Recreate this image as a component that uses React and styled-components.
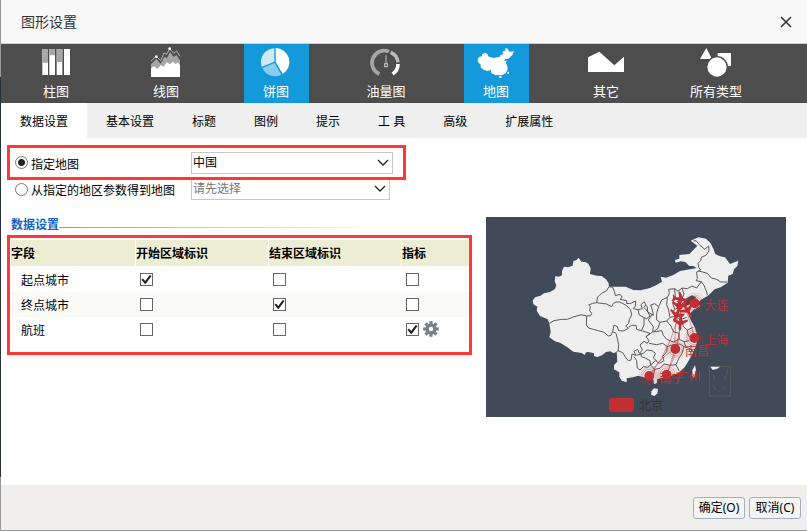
import React, { useState } from "react";
import styled, { createGlobalStyle } from "styled-components";

const chartTypes = [
  { key: "bar", label: "柱图" },
  { key: "line", label: "线图" },
  { key: "pie", label: "饼图" },
  { key: "gauge", label: "油量图" },
  { key: "map", label: "地图" },
  { key: "other", label: "其它" },
  { key: "all", label: "所有类型" },
];

const tabs = [
  "数据设置",
  "基本设置",
  "标题",
  "图例",
  "提示",
  "工 具",
  "高级",
  "扩展属性",
];

const columns = ["开始区域标识", "结束区域标识", "指标"];

const initialFields = [
  { name: "起点城市", checks: [true, false, false] },
  { name: "终点城市", checks: [false, true, false] },
  { name: "航班", checks: [false, false, true], gear: true },
];

const cities = [
  { name: "大连", x: 644, y: 280, tx: 673, ty: 300 },
  { name: "上海", x: 643, y: 384, tx: 673, ty: 406 },
  { name: "南昌", x: 586, y: 417, tx: 615, ty: 438 },
  { name: "南宁", x: 508, y: 498, tx: 538, ty: 518 },
  { name: "广州", x: 560, y: 494, tx: 590, ty: 514 },
];

const planes = [
  { x: 602, y: 268, r: 100 },
  { x: 598, y: 288, r: 190 },
  { x: 622, y: 300, r: 150 },
  { x: 590, y: 314, r: 200 },
  { x: 601, y: 338, r: 184 },
];

const CHINA =
  "M158 272L165 262L182 257L192 250L210 246L225 237L229 225L224 214L226 198L236 200L246 196L246 183L252 170L264 172L278 167L280 153L290 150L296 143L304 155L316 156L325 161L332 175L330 192L350 197L365 198L378 208L386 220L387 230L410 230L437 230L460 240L482 241L510 234L528 226L546 215L542 200L558 203L580 195L600 183L635 177L650 174L640 168L628 168L616 156L602 154L587 158L585 150L598 146L598 135L628 132L642 118L652 107L632 92L655 82L678 86L692 100L700 116L706 132L720 139L735 142L750 162L775 152L772 168L762 178L758 192L745 197L743 218L722 232L704 238L695 247L684 257L668 266L652 278L640 276L648 262L636 256L620 264L610 276L616 288L634 282L652 280L660 288L640 300L626 316L634 334L644 352L650 370L641 380L652 392L646 412L638 430L626 452L614 472L596 488L575 497L555 502L532 507L530 520L522 522L520 508L496 503L475 497L458 502L440 505L440 517L425 512L418 500L418 487L402 478L402 465L412 455L410 425L400 430L392 424L378 426L366 436L352 441L342 438L342 430L325 426L318 427L314 435L305 429L280 425L262 412L240 398L225 394L208 382L212 366L208 340L203 328L180 318L170 302L172 290L160 283Z";

const PROVINCES = [
  "M208 340L222 332L245 328L262 328L280 321L303 314L320 318L332 317L335 310L329 302L331 290L326 285L338 280L350 278L352 262L365 250L380 242L387 230",
  "M320 318L319 345L326 354L340 358L355 362L372 367L385 378L393 376L398 365L402 345L412 350L416 362L430 363L445 355L437 348L446 340L448 328L455 315L452 300L440 287L420 276L408 276L400 280L395 290L380 282L350 278",
  "M387 230L398 232L403 244L406 257L420 253L427 262L420 268L440 272L440 281L452 280L467 273L466 288L460 296L474 299L478 315L492 323L492 345L484 362L470 358L468 346L455 346L446 352",
  "M474 299L487 296L483 284L493 275L497 284L492 293L502 303L510 318L500 326L492 323",
  "M398 365L408 370L413 390L416 404L414 422L428 428L438 444L445 452L453 450L456 432L468 436L462 424L473 418L478 430L487 420L480 405L492 394L502 400L507 392L498 380L510 370L484 362",
  "M414 422L410 426M462 440L470 452L472 474L480 480L490 470L503 472L512 465",
  "M495 284L502 290L503 306L520 316L517 300L512 285L524 281L536 290L545 270L562 262L568 250L566 238L584 236L594 244L606 234L622 236L636 228L650 234L664 215",
  "M536 290L530 310L530 330L540 337L560 333L570 322L566 300L560 284L562 262",
  "M517 312L505 330L520 350L518 366L498 380M540 337L534 355L520 366M520 366L545 362L550 376L560 388L580 396L596 388",
  "M570 322L590 318L600 330L620 322M560 333L573 348L580 365L596 370L598 388L612 395L628 392M606 330L610 350L622 360L625 378L641 380",
  "M584 236L586 262L578 280L584 298L576 310M606 234L612 252L605 268L590 275M584 298L604 288L610 276",
  "M507 400L530 404L548 400L562 410L560 425L548 440L552 452L538 460L526 452L512 465L510 452L496 444L484 440L482 428",
  "M562 410L580 404L600 402L612 410L606 430L596 446L588 464L570 466L552 462M612 410L630 416L640 428",
  "M470 436L490 430L500 420L516 422L526 430L520 444L530 452",
  "M512 465L524 478L540 475L552 462M524 478L520 500M588 464L598 484",
  "M612 395L618 412M622 360L640 352",
  "M640 93L648 92L658 104L674 118L686 108L687 122L678 136L664 142L662 152L654 160L656 172L662 180L650 186L652 206L648 212L664 215L672 226L680 246L682 256",
  "M656 183L668 186L682 190L694 204L710 208L722 216L741 216",
];

const GlobalStyle = createGlobalStyle`
  * {
    box-sizing: border-box;
  }
  body {
    margin: 0;
    font-family: "Noto Sans", "Noto Sans CJK SC", sans-serif;
    font-size: 12px;
    line-height: 18px;
    color: #000;
  }
  button, select, input {
    font: inherit;
    color: inherit;
    margin: 0;
  }
`;

const TypeIcon = ({ type }) => (
  <TypeSvg viewBox="0 0 129 96" aria-hidden="true">
    {type === "bar" && (
      <>
        <path
          fill="#fff"
          d="M22 6h17v78H22zM43 6h17v78H43zM65 6h17v78H65zM87 6h18v78H87z"
        />
        <path fill="#a6a6a6" d="M22 6h17v41H22zM43 6h17v19H43zM65 6h17v39H65z" />
      </>
    )}
    {type === "line" && (
      <>
        <path
          fill="#a6a6a6"
          d="M18 52L34 36L47 50L58 29L66 33L75 15L86 30L94 24L105 40V90H18Z"
        />
        <path
          fill="#fff"
          d="M18 64L27 57L37 66L47 54L55 60L65 46L75 52L84 44L92 52L98 46L105 54V90H18Z"
        />
        <path
          fill="none"
          stroke="#b5b5b5"
          strokeWidth="3"
          d="M18 42L34 28L47 41L57 18L65 22L74 5L86 19L95 12L105 28"
        />
        <circle cx="34" cy="29" r="4" fill="#fff" />
        <circle cx="74" cy="5" r="4" fill="#fff" />
      </>
    )}
    {type === "pie" && (
      <>
        <path fill="#cfe9f7" d="M58 44V4A41 41 0 0 0 20 59Z" />
        <path fill="#86cdee" d="M59 48L22 63A41 41 0 0 0 79 83Z" />
        <path fill="#fff" d="M62 44V3A42 42 0 0 1 83 81Z" />
      </>
    )}
    {type === "gauge" && (
      <g fill="none" strokeWidth="11">
        <path stroke="#a6a6a6" d="M43 81A36 36 0 0 1 72 14" />
        <path stroke="#bcbcbc" d="M77 16A36 36 0 0 1 99 46" />
        <path stroke="#fff" d="M99 51A36 36 0 0 1 83 81" />
        <path stroke="#a6a6a6" strokeWidth="4" d="M63 25V49" />
        <rect x="59" y="50" width="8" height="9" stroke="#d0d0d0" strokeWidth="3" />
      </g>
    )}
    {type === "map" && (
      <path
        fill="#fff"
        d="M8 35L14 29L21 28L21 22L30 17L37 21L41 29L56 33L75 29L76 24L87 21L82 18L85 12L91 12L91 4L98 5L103 14L117 13L112 24L100 35L90 37L88 43L97 40L92 46L97 58L98 67L92 78L83 84L74 85L69 84L60 85L56 81L49 79L48 69L37 72L26 68L17 61L17 53L9 45ZM73 87h6v6h-6zM97 74h5v6h-5z"
      />
    )}
    {type === "other" && (
      <path fill="#fff" d="M9 31L43 14L88 55L117 29V75H9Z" />
    )}
    {type === "all" && (
      <>
        <path fill="#fff" d="M34 3L51 36H15ZM68 18h40v39H68z" />
        <circle
          cx="66"
          cy="60"
          r="31"
          fill="#fff"
          stroke="#4d4d4d"
          strokeWidth="4"
        />
      </>
    )}
  </TypeSvg>
);

const Chevron = () => (
  <ChevronSvg viewBox="0 0 12 8" aria-hidden="true">
    <path d="M1 1L6 6L11 1" fill="none" stroke="#222" strokeWidth="1.3" />
  </ChevronSvg>
);

const Gear = () => (
  <svg width="16" height="16" viewBox="-8 -8 16 16" aria-hidden="true">
    {[0, 45, 90, 135].map((angle) => (
      <path
        key={angle}
        d="M-1.6 -7.8H1.6V7.8H-1.6Z"
        fill="#7c8084"
        transform={`rotate(${angle})`}
      />
    ))}
    <circle r="5.6" fill="#7c8084" />
    <circle r="2.2" fill="#fff" />
  </svg>
);

const FlightMap = () => (
  <MapSvg viewBox="18 21 900 600" role="img" aria-label="中国">
    <g fill="#eee">
      <path d={CHINA} />
      <path d="M514 544L522 535L534 537L532 550L524 558L514 555Z" />
      <path d="M645 466L636 482L636 496L642 504L648 480Z" />
    </g>
    <g fill="none" stroke="#5a5a5a" strokeWidth="3" strokeLinejoin="round">
      {PROVINCES.map((d) => (
        <path key={d} d={d} />
      ))}
    </g>
    <rect
      x="688"
      y="469"
      width="63"
      height="89"
      fill="none"
      stroke="#5a5a5a"
      strokeWidth="3"
    />
    <path d="M691 470H720L712 476L698 480Z" fill="#eee" />
    <path
      d="M744 476L740 496L732 508M700 495L704 510M699 525L706 540M730 530L735 538M715 543L720 543"
      fill="none"
      stroke="#5a5a5a"
      strokeWidth="3"
    />
    <g fill="none" stroke="#c22e34" strokeWidth="3" strokeOpacity="0.5">
      <path d="M602 270Q622 262 644 280M602 270Q630 320 643 384" />
      <path d="M602 270Q606 350 586 417M602 270Q580 350 586 417" />
      <path d="M602 270Q590 390 508 498M602 270Q610 400 560 494" />
      <path d="M586 417Q540 440 508 498M586 417L560 494" />
    </g>
    <g fill="#c22e34">
      {planes.map((p) => (
        <path
          key={`${p.x}-${p.y}`}
          transform={`translate(${p.x} ${p.y}) rotate(${p.r})`}
          d="M0 -25L4 -19V-7L22 5V11L4 5V17L10 23V26L0 23L-10 26V23L-4 17V5L-22 11V5L-4 -7V-19Z"
        />
      ))}
      {cities.map((c) => (
        <g key={c.name}>
          <circle cx={c.x} cy={c.y} r="15" />
          <g fill="none" stroke="#c22e34" strokeWidth="2">
            <circle cx={c.x} cy={c.y} r="20" strokeOpacity="0.6" />
            <circle cx={c.x} cy={c.y} r="25" strokeOpacity="0.45" />
            <circle cx={c.x} cy={c.y} r="31" strokeOpacity="0.2" />
          </g>
          <text x={c.tx} y={c.ty} fontSize="36">
            {c.name}
          </text>
        </g>
      ))}
      <rect x="387" y="564" width="75" height="42" rx="9" />
    </g>
    <text x="477" y="600" fontSize="36" fill="#333">
      北京
    </text>
  </MapSvg>
);

const App = () => {
  const [activeTab, setActiveTab] = useState("数据设置");
  const [types, setTypes] = useState(["pie", "map"]);
  const [source, setSource] = useState("map");
  const [fields, setFields] = useState(initialFields);

  const toggleType = (key) => {
    setTypes(
      types.includes(key) ? types.filter((t) => t !== key) : [...types, key]
    );
  };

  const toggleCheck = (row, col) => {
    setFields(
      fields.map((field, i) =>
        i === row
          ? { ...field, checks: field.checks.map((c, j) => (j === col ? !c : c)) }
          : field
      )
    );
  };

  return (
    <Page>
      <GlobalStyle />
      <Dialog>
        <TitleBar>
          <Title>图形设置</Title>
          <CloseButton type="button" aria-label="关闭">
            <svg width="12" height="12" viewBox="0 0 12 12">
              <path
                d="M1 1L11 11M11 1L1 11"
                stroke="#333"
                strokeWidth="1.5"
                fill="none"
              />
            </svg>
          </CloseButton>
        </TitleBar>
        <TypeBar>
          {chartTypes.map((type) => (
            <TypeButton
              key={type.key}
              type="button"
              $active={types.includes(type.key)}
              onClick={() => toggleType(type.key)}
            >
              <TypeIcon type={type.key} />
              {type.label}
            </TypeButton>
          ))}
        </TypeBar>
        <TabBar>
          {tabs.map((tab) => (
            <TabButton
              key={tab}
              type="button"
              $active={tab === activeTab}
              onClick={() => setActiveTab(tab)}
            >
              {tab}
            </TabButton>
          ))}
        </TabBar>
        <Content>
          <SourceRow $highlight>
            <Radio
              id="source-map"
              name="source"
              checked={source === "map"}
              onChange={() => setSource("map")}
            />
            <SourceLabel htmlFor="source-map">指定地图</SourceLabel>
            <SelectBox>
              <Select aria-label="指定地图">
                <option>中国</option>
              </Select>
              <Chevron />
            </SelectBox>
          </SourceRow>
          <SourceRow>
            <Radio
              id="source-param"
              name="source"
              checked={source === "param"}
              onChange={() => setSource("param")}
            />
            <SourceLabel htmlFor="source-param">
              从指定的地区参数得到地图
            </SourceLabel>
            <SelectBox>
              <Select $muted aria-label="从指定的地区参数得到地图">
                <option>请先选择</option>
              </Select>
              <Chevron />
            </SelectBox>
          </SourceRow>
          <Columns>
            <FieldSection>
              <SectionTitle>数据设置</SectionTitle>
              <TableFrame>
                <Table>
                  <thead>
                    <tr>
                      <HeadCell $width={125}>字段</HeadCell>
                      {columns.map((column, i) => (
                        <HeadCell key={column} $width={i < 2 && 133}>
                          {column}
                        </HeadCell>
                      ))}
                    </tr>
                  </thead>
                  <tbody>
                    {fields.map((field, row) => (
                      <FieldRow key={field.name}>
                        <NameCell>{field.name}</NameCell>
                        {field.checks.map((checked, col) => (
                          <CheckCell key={columns[col]}>
                            <CheckGroup>
                              <Checkbox
                                aria-label={`${field.name} ${columns[col]}`}
                                checked={checked}
                                onChange={() => toggleCheck(row, col)}
                              />
                              {field.gear && col === 2 && (
                                <GearButton type="button" aria-label="设置">
                                  <Gear />
                                </GearButton>
                              )}
                            </CheckGroup>
                          </CheckCell>
                        ))}
                      </FieldRow>
                    ))}
                  </tbody>
                </Table>
              </TableFrame>
            </FieldSection>
            <MapPanel>
              <FlightMap />
            </MapPanel>
          </Columns>
        </Content>
        <Footer>
          <FooterButton type="button">确定(O)</FooterButton>
          <FooterButton type="button">取消(C)</FooterButton>
        </Footer>
      </Dialog>
    </Page>
  );
};

export default App;

const Page = styled.div`
  min-height: 100vh;
  display: flex;
  padding: 0 0 1px 1px;
  background: linear-gradient(#9a9a9a 77px, #28303e 77px 477px, #9a9a9a 477px);
`;

const Dialog = styled.div`
  flex: 1;
  min-width: 0;
  display: flex;
  flex-direction: column;
  background: #fff;
`;

const TitleBar = styled.header`
  height: 44px;
  display: flex;
  align-items: center;
  justify-content: space-between;
  padding: 0 11px 0 20px;
  background: #f8f8f8;
  border-bottom: 1px solid #c8cccc;
`;

const Title = styled.h1`
  margin: 0;
  font-size: 14px;
  line-height: 20px;
  font-weight: 400;
  color: #333;
`;

const CloseButton = styled.button`
  display: flex;
  padding: 4px;
  border: none;
  background: none;
  cursor: pointer;
`;

const TypeBar = styled.nav`
  display: flex;
  gap: 45px;
  padding-left: 23px;
  background: #4d4d4d;
`;

const TypeButton = styled.button`
  width: 65px;
  height: 59px;
  display: flex;
  flex-direction: column;
  align-items: center;
  gap: 2px;
  padding: 3px 1px 0 0;
  border: none;
  background: ${({ $active }) => ($active ? "#1499db" : "transparent")};
  color: #fff;
  font-size: 13px;
  line-height: 20px;
  white-space: nowrap;
  cursor: pointer;
`;

const TypeSvg = styled.svg`
  width: 43px;
  height: 32px;
  flex: none;
`;

const TabBar = styled.nav`
  display: flex;
  background: #efefef;
`;

const TabButton = styled.button`
  height: 35px;
  padding: 2px 19px 0;
  border: none;
  background: ${({ $active }) => ($active ? "#fff" : "transparent")};
  white-space: nowrap;
  cursor: pointer;
`;

const Content = styled.main`
  flex: 1;
  padding: 7px 21px 20px 6px;
`;

const SourceRow = styled.div`
  position: relative;
  z-index: ${({ $highlight }) => ($highlight ? 1 : 0)};
  max-width: ${({ $highlight }) => ($highlight ? "399px" : "396px")};
  height: ${({ $highlight }) => ($highlight ? "35px" : "24px")};
  margin-bottom: -3px;
  display: flex;
  align-items: center;
  padding-right: 10px;
  border: 3px solid ${({ $highlight }) => ($highlight ? "#ff3737" : "transparent")};
  border-width: ${({ $highlight }) => ($highlight ? "3px" : "0 3px")};
`;

const Radio = styled.input.attrs({ type: "radio" })`
  appearance: none;
  width: 13px;
  height: 13px;
  margin: 0 3px 0 5px;
  border: 1px solid #777;
  border-radius: 50%;
  &:checked {
    background: radial-gradient(#222 3px, #fff 4px);
  }
`;

const SourceLabel = styled.label`
  width: 160px;
  padding-top: 4px;
  white-space: nowrap;
`;

const SelectBox = styled.div`
  position: relative;
  flex: 1;
`;

const Select = styled.select`
  display: block;
  appearance: none;
  width: 100%;
  height: 22px;
  padding: 0 20px 0 1px;
  border: 1px solid #c8c8c8;
  border-radius: 0;
  background: #fff;
  color: ${({ $muted }) => ($muted ? "#777" : "#000")};
`;

const ChevronSvg = styled.svg`
  position: absolute;
  top: 7px;
  right: 4px;
  width: 12px;
  height: 8px;
  pointer-events: none;
`;

const Columns = styled.div`
  display: flex;
  align-items: flex-start;
  gap: 14px;
  padding-top: 19px;
`;

const FieldSection = styled.section`
  flex: 1;
  min-width: 0;
`;

const SectionTitle = styled.h2`
  display: flex;
  align-items: center;
  margin: 0;
  padding: 0 111px 2px 4px;
  font-size: 12px;
  line-height: 16px;
  font-weight: 700;
  color: #1464c0;
  &::after {
    content: "";
    flex: 1;
    height: 1px;
    margin-top: 4px;
    background: linear-gradient(to right, #6fa5dc, #f0f5fa);
  }
`;

const TableFrame = styled.div`
  padding: 2px 0 10px 1px;
  border: 3px solid #ff3737;
`;

const Table = styled.table`
  width: 100%;
  table-layout: fixed;
  border-collapse: separate;
  border-spacing: 0;
`;

const HeadCell = styled.th`
  width: ${({ $width }) => ($width ? `${$width}px` : "auto")};
  height: 27px;
  padding: 2px 0 0;
  background: #ecedd3;
  border-right: 1px solid #fff;
  border-bottom: 1px solid #fff;
  text-align: left;
  font-weight: 700;
  white-space: nowrap;
  &:last-child {
    border-right: none;
  }
`;

const FieldRow = styled.tr`
  &:nth-child(even) {
    background: #fafaf8;
  }
`;

const NameCell = styled.td`
  height: 25px;
  padding: 2px 0 0 10px;
`;

const CheckCell = styled.td`
  height: 25px;
  padding: 0 0 0 4px;
`;

const CheckGroup = styled.div`
  display: flex;
  align-items: center;
  gap: 4px;
`;

const Checkbox = styled.input.attrs({ type: "checkbox" })`
  appearance: none;
  width: 13px;
  height: 13px;
  border: 1px solid #666;
  background: #fff;
  &:checked::before {
    content: "";
    display: block;
    width: 11px;
    height: 11px;
    background: #222;
    clip-path: polygon(
      4% 52%,
      18% 42%,
      38% 64%,
      80% 8%,
      96% 18%,
      42% 92%,
      36% 92%
    );
  }
`;

const GearButton = styled.button`
  display: flex;
  padding: 0 0 2px;
  border: none;
  background: none;
  cursor: pointer;
`;

const MapPanel = styled.aside`
  flex: 0 0 300px;
  background: #404a59;
`;

const MapSvg = styled.svg`
  display: block;
  width: 100%;
`;

const Footer = styled.footer`
  display: flex;
  justify-content: flex-end;
  gap: 4px;
  padding: 12px 6px 11px;
  background: #f0efee;
`;

const FooterButton = styled.button`
  min-width: 52px;
  height: 22px;
  padding: 0 4px;
  border: 1px solid #9fb0c0;
  border-radius: 3px;
  background: #f5f5f4;
  white-space: nowrap;
  cursor: pointer;
`;
